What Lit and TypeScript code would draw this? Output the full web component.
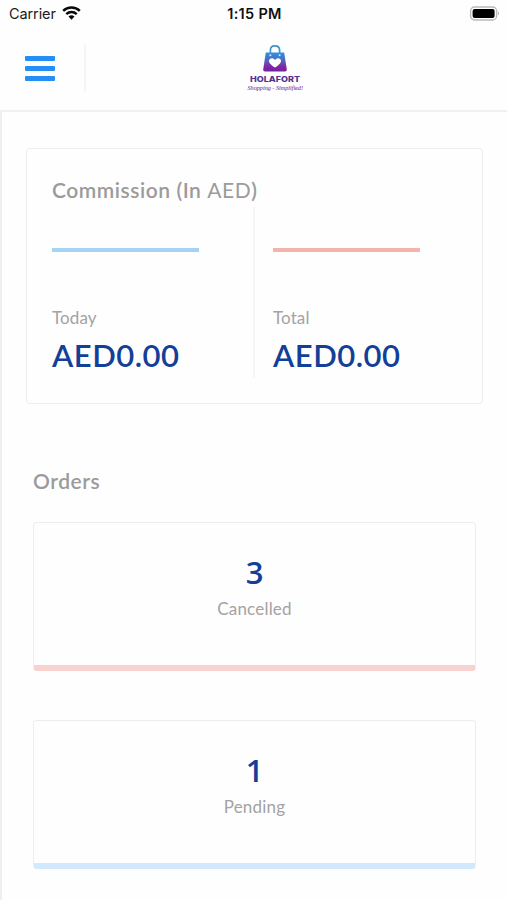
import { LitElement, html, css } from "lit";
import { customElement, property } from "lit/decorators.js";

@customElement("status-bar")
class StatusBar extends LitElement {
  static styles = css`
    :host { display: grid; grid-template-columns: 1fr auto 1fr; align-items: center; height: 28px; padding: 0 7px 2px 9px; box-sizing: border-box; font-family: Inter, sans-serif; font-size: 14.5px; color: #1c1c1c; }
    .left { display: flex; align-items: center; gap: 6px; }
    .carrier { letter-spacing: -0.1px; }
    .time { font-weight: 600; font-size: 14.5px; letter-spacing: 0.3px; color: #111; }
    .battery { justify-self: end; }
    svg { display: block; }
  `;
  render() {
    return html`
      <div class="left">
        <span class="carrier">Carrier</span>
        <svg width="19" height="15" viewBox="0 0 19 15" fill="none" stroke="#0a0a0a" stroke-width="2.5">
          <path d="M1.2 4.9 A12 12 0 0 1 17.8 4.9" />
          <path d="M4.3 8.2 A7.5 7.5 0 0 1 14.7 8.2" />
          <path d="M9.5 13.7 L6.5 10.6 A4.4 4.4 0 0 1 12.5 10.6 Z" fill="#0a0a0a" stroke="none" />
        </svg>
      </div>
      <span class="time">1:15 PM</span>
      <svg class="battery" width="31" height="15" viewBox="0 0 31 15">
        <rect x="1.6" y="1" width="26" height="13" rx="4" fill="#fff" stroke="#b9b9b9" stroke-width="1.4" />
        <rect x="3.6" y="3" width="22" height="9" rx="2" fill="#000" />
        <path d="M29 5.2 Q31 7.3 29 9.6 Z" fill="#b0b0b0" />
      </svg>
    `;
  }
}

@customElement("brand-logo")
class BrandLogo extends LitElement {
  static styles = css`
    :host { display: block; }
    svg { display: block; overflow: visible; }
    .name { font: 800 7.8px Inter, sans-serif; fill: #55308f; }
    .tag { font: italic 7px "Liberation Serif", serif; fill: #7b3fa8; stroke: #7b3fa8; stroke-width: 0.1px; }
  `;
  render() {
    return html`
      <svg width="70" height="52" viewBox="0 0 70 52">
        <defs>
          <linearGradient id="bag" x1="0" y1="0" x2="0" y2="1">
            <stop offset="0" stop-color="#2f94dc" />
            <stop offset="0.45" stop-color="#5561bd" />
            <stop offset="0.75" stop-color="#8226a4" />
            <stop offset="1" stop-color="#7322a0" />
          </linearGradient>
        </defs>
        <path d="M25.4 12 V6.2 Q25.4 1.8 30 1.8 Q34.6 1.8 34.6 6.2 V12" fill="none" stroke="#4192ca" stroke-width="1.7" />
        <path d="M20.8 8.5 H39.2 L41.8 25.5 Q42 27.6 40 27.6 H20 Q18 27.6 18.2 25.5 Z" fill="url(#bag)" />
        <circle cx="25.4" cy="11.2" r="1" fill="#d4e9f7" />
        <circle cx="34.6" cy="11.2" r="1" fill="#d4e9f7" />
        <path d="M30 23.6 C27.5 22 24 19.4 24 17 C24 14 28 13.3 30 16 C32 13.3 36 14 36 17 C36 19.4 32.5 22 30 23.6 Z" fill="#fff" />
        <text class="name" x="5" y="38.3" textLength="50" lengthAdjust="spacingAndGlyphs">HOLAFORT</text>
        <text class="tag" x="2.5" y="45.8" textLength="55.5" lengthAdjust="spacingAndGlyphs">Shopping - Simplified!</text>
      </svg>
    `;
  }
}

@customElement("commission-stat")
class CommissionStat extends LitElement {
  @property() label = "";
  @property() value = "";
  @property({ reflect: true }) tone = "blue";
  static styles = css`
    :host { display: block; }
    .line { width: 147px; height: 4px; background: #a4d3f6; }
    :host([tone="red"]) .line { background: #f4b3ac; }
    .label { margin-top: 54px; font-size: 17px; line-height: 24px; letter-spacing: 0.1px; color: #a3a3a3; }
    .value { margin-top: 5px; font-size: 31px; line-height: 40px; font-weight: 600; letter-spacing: 0.5px; color: #123f98; white-space: nowrap; }
  `;
  render() {
    return html`
      <div class="line"></div>
      <div class="label">${this.label}</div>
      <div class="value">${this.value}</div>
    `;
  }
}

@customElement("order-card")
class OrderCard extends LitElement {
  @property() label = "";
  @property({ type: Number }) count = 0;
  @property({ reflect: true }) tone = "blue";
  static styles = css`
    :host { display: block; box-sizing: border-box; height: 149px; border: 1px solid #ededed; border-bottom: 6px solid #d2e8fd; border-radius: 4px; padding-top: 29px; text-align: center; }
    :host([tone="red"]) { border-bottom-color: #f7d2ce; }
    .count { font-family: "Open Sans", sans-serif; font-size: 31px; line-height: 40px; font-weight: 600; color: #123f98; }
    .label { margin-top: 5px; font-size: 17px; line-height: 24px; color: #a3a3a3; letter-spacing: 0.2px; }
  `;
  render() {
    return html`
      <div class="count">${this.count}</div>
      <div class="label">${this.label}</div>
    `;
  }
}

@customElement("app-root")
class AppRoot extends LitElement {
  static styles = css`
    :host { display: flex; flex-direction: column; height: 900px; overflow: hidden; background: #fefefe; font-family: Lato, sans-serif; }
    .header { display: grid; grid-template-columns: 85px 1fr; height: 84px; flex: none; box-sizing: border-box; border-bottom: 2px solid #f1f1f1; }
    .menu { display: flex; flex-direction: column; justify-content: center; gap: 5px; height: 48px; margin-top: 16px; padding: 0 0 0 25px; border-right: 2px solid #f5f5f5; box-sizing: border-box; width: 86px; }
    .bar { width: 30px; height: 5px; border-radius: 1px; background: #2490f5; }
    brand-logo { margin: 16px 0 0 160px; }
    .body { flex: 1; border-left: 2px solid #efefef; padding: 36px 24px 0 24px; }
    .commission { height: 256px; box-sizing: border-box; border: 1px solid #ededed; border-radius: 4px; padding: 26px 25px 0; }
    .title { margin: 0; font-size: 21px; line-height: 30px; font-weight: 600; letter-spacing: 0.55px; color: #9b9b9b; white-space: nowrap; }
    .currency { font-weight: 400; }
    .stats { display: grid; grid-template-columns: 203px 1fr; margin-top: 2px; height: 171px; }
    .stats > * { padding-top: 41px; }
    .first { border-right: 2px solid #f6f6f6; box-sizing: border-box; }
    .second { padding-left: 18px; }
    .orders { padding: 62px 7px 0 7px; }
    .cards { display: flex; flex-direction: column; gap: 49px; margin-top: 26px; }
  `;
  render() {
    return html`
      <status-bar></status-bar>
      <div class="header">
        <div class="menu"><div class="bar"></div><div class="bar"></div><div class="bar"></div></div>
        <brand-logo></brand-logo>
      </div>
      <div class="body">
        <div class="commission">
          <h2 class="title">Commission (In <span class="currency">AED</span>)</h2>
          <div class="stats">
            <commission-stat class="first" label="Today" value="AED0.00"></commission-stat>
            <commission-stat class="second" tone="red" label="Total" value="AED0.00"></commission-stat>
          </div>
        </div>
        <div class="orders">
          <h2 class="title">Orders</h2>
          <div class="cards">
            <order-card tone="red" count="3" label="Cancelled"></order-card>
            <order-card count="1" label="Pending"></order-card>
          </div>
        </div>
      </div>
    `;
  }
}
